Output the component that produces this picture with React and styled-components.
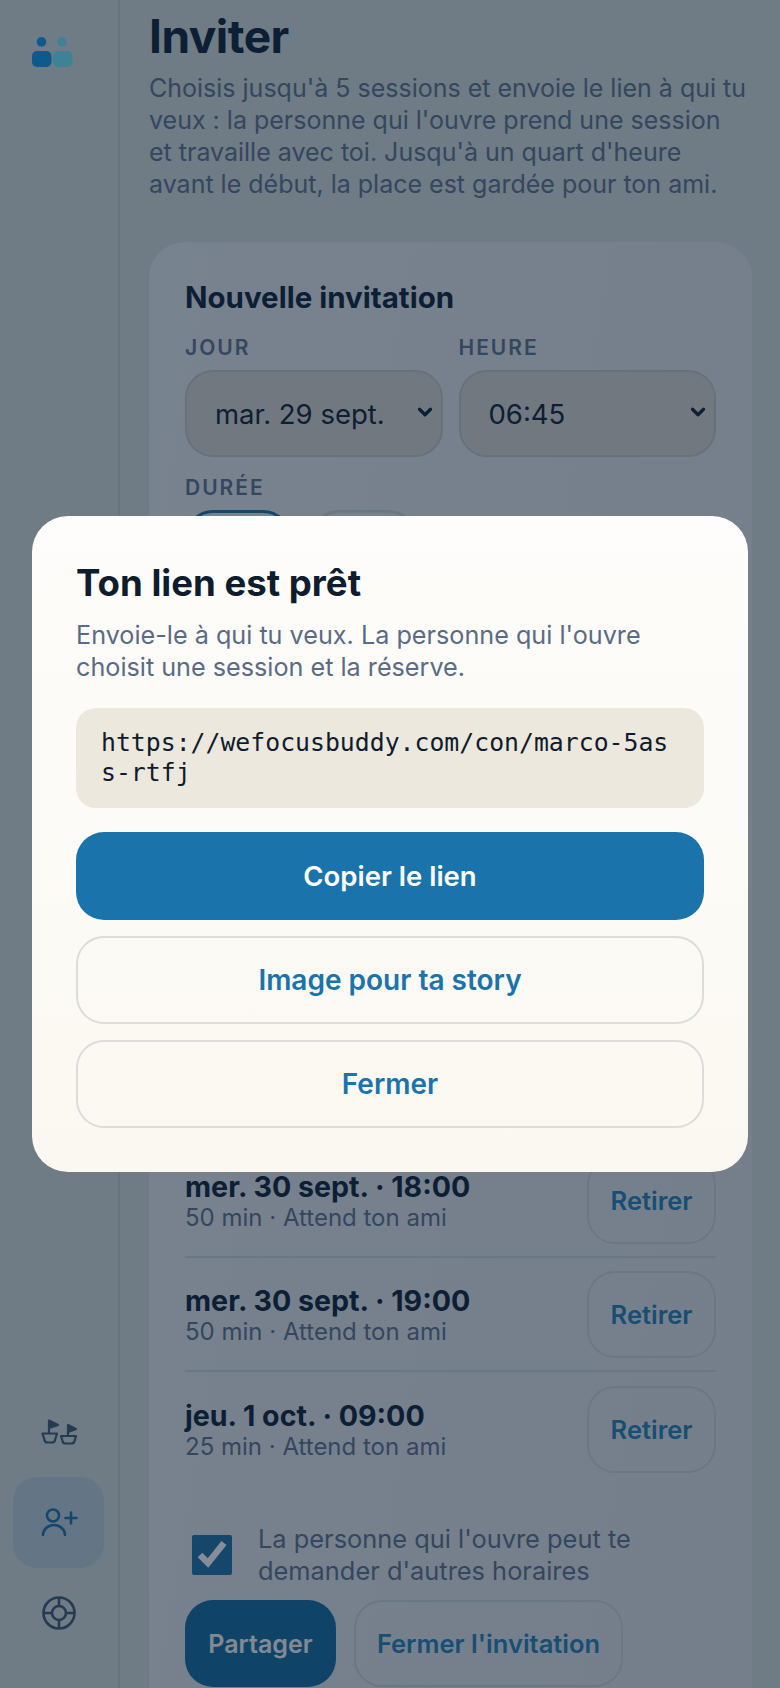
import React from 'react'
import styled, { createGlobalStyle } from 'styled-components'
import { ChevronDown } from 'lucide-react'

const GlobalStyle = createGlobalStyle`
  html, body {
    margin: 0;
    height: 100%;
    overflow: hidden;
  }
  body {
    font-family: Inter, "Liberation Sans", sans-serif;
    color: #09223a;
  }
  * {
    box-sizing: border-box;
  }
`

const sessions = [
  { id: 1, when: 'mar. 29 sept. · 06:45', meta: '50 min · Attend ton ami' },
  { id: 2, when: 'mar. 29 sept. · 18:00', meta: '50 min · Attend ton ami' },
  { id: 3, when: 'mer. 30 sept. · 18:00', meta: '50 min · Attend ton ami' },
  { id: 4, when: 'mer. 30 sept. · 19:00', meta: '50 min · Attend ton ami' },
  { id: 5, when: 'jeu. 1 oct. · 09:00', meta: '25 min · Attend ton ami' },
]

function LogoIcon() {
  return (
    <svg width="41" height="30" viewBox="0 0 41 30">
      <circle cx="9.500" cy="4.800" r="4.800" fill="#0b98ea" />
      <circle cx="30" cy="4.800" r="4.800" fill="#6fe8fe" />
      <rect x="0" y="14" width="19.500" height="16" rx="5" fill="#0b98ea" />
      <rect x="21" y="14" width="19.500" height="16" rx="5" fill="#6fe8fe" />
    </svg>
  )
}

function BoatsIcon() {
  return (
    <svg width="36" height="26" viewBox="0 0 36 26" fill="none" stroke="#3c5a78" strokeWidth="2.200" strokeLinejoin="round" strokeLinecap="round">
      <path d="M8 14V1.500L17 6l-9 3" fill="#3c5a78" />
      <path d="M1.500 14.500H16L14 21q-.5 2.500-3 2.500H6.500q-2.500 0-3-2.500z" />
      <path d="M27 17V6l8 4-8 3" fill="#3c5a78" />
      <path d="M20 17h15l-1.500 5q-.5 2.500-3 2.500h-6q-2.500 0-3-2.500z" />
    </svg>
  )
}

function PersonPlusIcon() {
  return (
    <svg width="38" height="30" viewBox="0 0 38 30" fill="none" stroke="#1a73ab" strokeWidth="2.600" strokeLinecap="round">
      <circle cx="13" cy="8.500" r="6" />
      <path d="M3 28a11 10 0 0 1 22 0" />
      <path d="M25.500 11h11M31 5.500v11" />
    </svg>
  )
}

function BuoyIcon() {
  return (
    <svg width="34" height="34" viewBox="0 0 34 34" fill="none" stroke="#3c5a78" strokeWidth="2.600">
      <circle cx="17" cy="17" r="15.500" />
      <circle cx="17" cy="17" r="7" />
      <path d="M17 1.500V10M17 24v8.500M1.500 17H10M24 17h8.500" />
    </svg>
  )
}

export default function App() {
  return (
    <Page>
      <GlobalStyle />
      <Sidebar>
        <Logo>
          <LogoIcon />
        </Logo>
        <Nav>
          <NavItem><BoatsIcon /></NavItem>
          <NavItem $active><PersonPlusIcon /></NavItem>
          <NavItem><BuoyIcon /></NavItem>
        </Nav>
      </Sidebar>

      <Main>
        <Title>Inviter</Title>
        <Intro>
          Choisis jusqu'à 5 sessions et envoie le lien à qui tu veux : la personne qui l'ouvre
          prend une session et travaille avec toi. Jusqu'à un quart d'heure avant le début,
          la place est gardée pour ton ami.
        </Intro>

        <Card>
          <CardTitle>Nouvelle invitation</CardTitle>
          <Fields>
            <Field>
              <FieldLabel>Jour</FieldLabel>
              <SelectWrap>
                <Select defaultValue="mar">
                  <option value="mar">mar. 29 sept.</option>
                  <option value="mer">mer. 30 sept.</option>
                </Select>
                <SelectArrow size={22} strokeWidth={3.500} />
              </SelectWrap>
            </Field>
            <Field>
              <FieldLabel>Heure</FieldLabel>
              <SelectWrap>
                <Select defaultValue="0645">
                  <option value="0645">06:45</option>
                  <option value="0700">07:00</option>
                </Select>
                <SelectArrow size={22} strokeWidth={3.500} />
              </SelectWrap>
            </Field>
          </Fields>

          <DurationLabel>Durée</DurationLabel>
          <Chips>
            <Chip $selected>50 min</Chip>
            <Chip>25 min</Chip>
          </Chips>
          <AddButton>Ajouter cette session</AddButton>

          <SessionList>
            {sessions.map((s) => (
              <SessionRow key={s.id}>
                <SessionText>
                  <SessionWhen>{s.when}</SessionWhen>
                  <SessionMeta>{s.meta}</SessionMeta>
                </SessionText>
                <RemoveButton>Retirer</RemoveButton>
              </SessionRow>
            ))}
          </SessionList>

          <CheckRow>
            <Check type="checkbox" defaultChecked />
            <span>La personne qui l'ouvre peut te demander d'autres horaires</span>
          </CheckRow>
          <Actions>
            <ShareButton>Partager</ShareButton>
            <CloseInviteButton>Fermer l'invitation</CloseInviteButton>
          </Actions>
        </Card>
      </Main>

      <Overlay>
        <Modal>
          <ModalTitle>Ton lien est prêt</ModalTitle>
          <ModalText>
            Envoie-le à qui tu veux. La personne qui l'ouvre choisit une session et la réserve.
          </ModalText>
          <LinkBox>https://wefocusbuddy.com/con/marco-5ass-rtfj</LinkBox>
          <CopyButton>Copier le lien</CopyButton>
          <OutlineButton>Image pour ta story</OutlineButton>
          <OutlineButton>Fermer</OutlineButton>
        </Modal>
      </Overlay>
    </Page>
  )
}

const Page = styled.div`
  display: flex;
  height: 1688px;
  overflow: hidden;
  background: #cfdadc;
`

const Sidebar = styled.aside`
  width: 120px;
  flex-shrink: 0;
  display: flex;
  flex-direction: column;
  justify-content: space-between;
  padding: 37px 14px 30px 13px;
  border-right: 2px solid #bdccd2;
`

const Logo = styled.div`
  padding-left: 19px;
`

const Nav = styled.nav`
  display: flex;
  flex-direction: column;
`

const NavItem = styled.div`
  height: 90.500px;
  display: flex;
  align-items: center;
  justify-content: center;
  border-radius: 24px;
  background: ${(p) => (p.$active ? '#b8d0de' : 'transparent')};
`

const Main = styled.main`
  flex: 1;
  min-width: 0;
  padding: 8px 28px 0 29px;
`

const Title = styled.h1`
  margin: 0;
  font-size: 46px;
  line-height: 56px;
  font-weight: 700;
  letter-spacing: -0.5px;
  color: #09223a;
`

const Intro = styled.p`
  margin: 8px 0 0;
  padding-right: 5px;
  font-size: 25px;
  line-height: 32px;
  color: #5a7090;
`

const Card = styled.section`
  margin-top: 42px;
  padding: 36px 36px 36px;
  border-radius: 36px;
  background: linear-gradient(100deg, #dfeaf0 0%, #dbe2e8 100%);
`

const CardTitle = styled.h2`
  margin: 0;
  font-size: 29.500px;
  line-height: 38px;
  font-weight: 700;
  color: #09223a;
`

const Fields = styled.div`
  display: grid;
  grid-template-columns: 1fr 1fr;
  gap: 16px;
  margin-top: 18px;
`

const Field = styled.div`
  min-width: 0;
`

const FieldLabel = styled.div`
  font-size: 21px;
  line-height: 28px;
  font-weight: 600;
  letter-spacing: 2px;
  text-transform: uppercase;
  color: #5a7090;
`

const DurationLabel = styled(FieldLabel)`
  margin-top: 17px;
`

const SelectWrap = styled.div`
  position: relative;
  margin-top: 8px;
`

const Select = styled.select`
  display: block;
  width: 100%;
  height: 87px;
  padding: 0 30px 0 28px;
  border: 2px solid #bcc6ce;
  border-radius: 28px;
  background: #d3d4d2;
  font-family: inherit;
  font-size: 27.500px;
  color: #09223a;
  appearance: none;
`

const SelectArrow = styled(ChevronDown)`
  position: absolute;
  top: 31px;
  right: 7px;
  color: #09223a;
  pointer-events: none;
`

const Chips = styled.div`
  display: flex;
  gap: 20px;
  margin-top: 8px;
`

const Chip = styled.div`
  width: 106px;
  height: 87px;
  display: flex;
  align-items: center;
  justify-content: center;
  border-radius: 28px;
  border: 3px solid ${(p) => (p.$selected ? '#1a73ab' : '#c4d2da')};
  font-size: 24px;
`

const AddButton = styled.button`
  display: block;
  width: 100%;
  height: 87px;
  margin: 20px 0 212px;
  border: 2px solid #c4d2da;
  border-radius: 28px;
  background: transparent;
  font-family: inherit;
  font-size: 24px;
  font-weight: 600;
  color: #2080b8;
`

const SessionList = styled.div`
  display: flex;
  flex-direction: column;
`

const SessionRow = styled.div`
  display: flex;
  align-items: center;
  justify-content: space-between;
  padding: 12.500px 0;
  min-height: 114px;
  border-bottom: 2px solid #c4d2da;

  &:last-child {
    border-bottom: none;
  }
`

const SessionText = styled.div`
  margin-top: 4px;
`

const SessionWhen = styled.div`
  font-size: 28.600px;
  line-height: 32px;
  font-weight: 700;
  color: #09223a;
`

const SessionMeta = styled.div`
  font-size: 24px;
  line-height: 30px;
  color: #5a7090;
`

const RemoveButton = styled.button`
  width: 129px;
  height: 87px;
  border: 2px solid #c4d2da;
  border-radius: 28px;
  background: transparent;
  font-family: inherit;
  font-size: 25.500px;
  font-weight: 600;
  color: #2080b8;
`

const CheckRow = styled.label`
  display: flex;
  align-items: center;
  gap: 26px;
  margin-top: 37px;
  padding-left: 7px;
  font-size: 25.400px;
  line-height: 32px;
  color: #5a7090;
`

const Check = styled.input`
  width: 40px;
  height: 40px;
  margin: 0;
  flex-shrink: 0;
  accent-color: #1a73ab;
`

const Actions = styled.div`
  display: flex;
  gap: 18px;
  margin-top: 13px;
`

const ShareButton = styled.button`
  width: 151px;
  height: 87px;
  border: none;
  border-radius: 28px;
  background: #0f6ca2;
  font-family: inherit;
  font-size: 25px;
  font-weight: 600;
  color: #f4f6f8;
`

const CloseInviteButton = styled(RemoveButton)`
  width: 269px;
`

const Overlay = styled.div`
  position: fixed;
  inset: 0;
  display: flex;
  align-items: center;
  justify-content: center;
  padding: 32px;
  background: rgba(15, 28, 46, 0.5);
`

const Modal = styled.div`
  width: 100%;
  display: flex;
  flex-direction: column;
  padding: 39px 44px 44px;
  border-radius: 36px;
  background: linear-gradient(180deg, #fefdfb 0%, #fbf8f1 100%);
`

const ModalTitle = styled.h2`
  margin: 0;
  font-size: 36.600px;
  line-height: 56px;
  font-weight: 700;
  color: #0f1c2e;
`

const ModalText = styled.p`
  margin: 8px 0 0;
  font-size: 25.200px;
  line-height: 32px;
  color: #5b6b85;
`

const LinkBox = styled.div`
  margin-top: 25px;
  padding: 20px 25px;
  min-height: 100px;
  border-radius: 20px;
  background: #ece8dd;
  font-family: "DejaVu Sans Mono", "Liberation Mono", monospace;
  font-size: 24.800px;
  line-height: 30px;
  word-break: break-all;
  color: #0f1c2e;
`

const CopyButton = styled.button`
  height: 88px;
  margin-top: 24px;
  border: none;
  border-radius: 28px;
  background: #1a73ab;
  font-family: inherit;
  font-size: 27.500px;
  font-weight: 600;
  color: #fff;
`

const OutlineButton = styled.button`
  height: 88px;
  margin-top: 16px;
  border: 2px solid #dddcd9;
  border-radius: 28px;
  background: transparent;
  font-family: inherit;
  font-size: 28px;
  font-weight: 600;
  color: #1a73ab;
`
